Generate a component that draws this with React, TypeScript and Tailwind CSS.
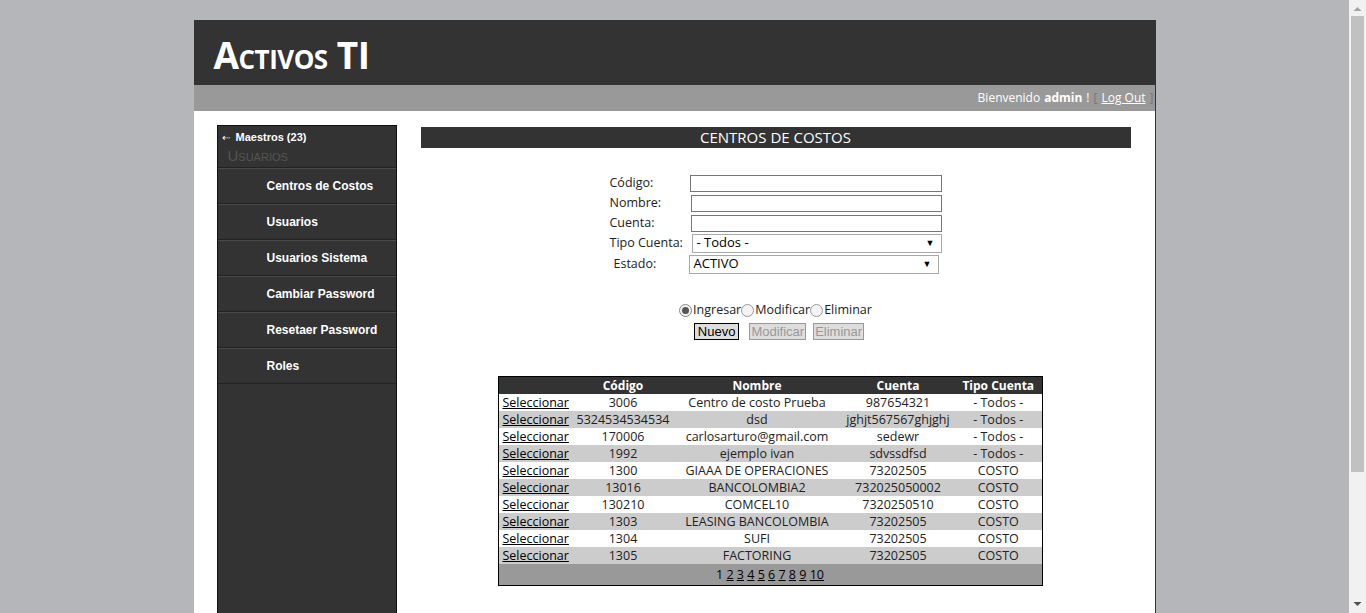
const menu = ['Centros de Costos', 'Usuarios', 'Usuarios Sistema', 'Cambiar Password', 'Resetaer Password', 'Roles']

const rows = [
  ['3006', 'Centro de costo Prueba', '987654321', '- Todos -'],
  ['5324534534534', 'dsd', 'jghjt567567ghjghj', '- Todos -'],
  ['170006', 'carlosarturo@gmail.com', 'sedewr', '- Todos -'],
  ['1992', 'ejemplo ivan', 'sdvssdfsd', '- Todos -'],
  ['1300', 'GIAAA DE OPERACIONES', '73202505', 'COSTO'],
  ['13016', 'BANCOLOMBIA2', '732025050002', 'COSTO'],
  ['130210', 'COMCEL10', '7320250510', 'COSTO'],
  ['1303', 'LEASING BANCOLOMBIA', '73202505', 'COSTO'],
  ['1304', 'SUFI', '73202505', 'COSTO'],
  ['1305', 'FACTORING', '73202505', 'COSTO'],
]

const ui = "font-['Open_Sans','Noto_Sans',sans-serif]"
const arial = "font-['Liberation_Sans',Arial,sans-serif]"

function Field({ label, children }: { label: string; children: React.ReactNode }) {
  return (
    <div className="flex h-5 items-center">
      <span className="w-[80px] text-[12.5px] text-[#222]">{label}</span>
      {children}
    </div>
  )
}

function Select({ value, w }: { value: string; w: string }) {
  return (
    <div className={`${w} flex h-[19px] items-center justify-between border border-[#a9a9a9] bg-white pl-1 pr-1.5 text-[13px] text-black`}>
      <span>{value}</span>
      <span className="text-[9px]">▼</span>
    </div>
  )
}

// page scrollbar as seen in the screenshot
function Scrollbar() {
  return (
    <div className="fixed right-0 top-0 flex h-screen w-[17px] flex-col items-center bg-[#f1f1f1]">
      <svg width="9" height="14" viewBox="0 0 9 14" className="mt-0.5">
        <path d="M0.5 9 L4.5 5 L8.5 9 Z" fill="#a3a3a3" />
      </svg>
      <div className="h-[456px] w-[13px] bg-[#c1c1c1]" />
      <div className="flex-1" />
      <svg width="9" height="14" viewBox="0 0 9 14" className="mb-0.5">
        <path d="M0.5 5 L4.5 9 L8.5 5 Z" fill="#505050" />
      </svg>
    </div>
  )
}

export default function App() {
  return (
    <div className={`min-h-[780px] bg-[#b5b6ba] pr-[17px] pt-5 ${ui}`}>
      <div className="mx-auto w-[962px] border-r border-[#333] bg-white">
        <header className="flex h-[65px] items-center bg-[#333] px-5">
          <h1 className="pt-1 text-[37px] font-bold leading-none tracking-[-0.5px] text-white [font-variant:small-caps]">Activos TI</h1>
        </header>
        <div className="flex h-[26px] items-center justify-end bg-[#999] pr-px text-[12px] text-white">
          Bienvenido <b className="ml-1">admin</b>
          <span className="ml-1">!</span>
          <span className="ml-1 text-[#777]">[</span>
          <a className="mx-1 underline">Log Out</a>
          <span className="text-[#777]">]</span>
        </div>

        <div className="flex gap-6 pl-[23px] pr-6 pt-[14px]">
          <aside className={`min-h-[640px] w-[180px] shrink-0 border border-[#111] bg-[#333] ${arial}`}>
            <div className="h-[42px] border-b border-[#222] px-1 pt-[3px]">
              <div className="flex items-center text-[11px] font-bold text-white">
                <span className="mr-1.5 text-[10px] font-normal">⇠</span>Maestros (23)
              </div>
              <div className="mt-[2px] pl-[6px] text-[15px] leading-4 text-[#555] [font-variant:small-caps]">Usuarios</div>
            </div>
            {menu.map((m) => (
              <div key={m} className="flex h-9 items-center border-b border-t border-b-[#222] border-t-[#4a4a4a] pl-[49px] text-[12px] font-bold text-white">
                {m}
              </div>
            ))}
          </aside>

          <main className="flex-1 pt-0.5">
            <div className="flex h-[21px] items-center justify-center bg-[#333] text-[15px] text-white">CENTROS DE COSTOS</div>

            <div className="mx-auto mt-[25px] w-[332px]">
              <Field label="Código:">
                <div className="h-[17px] w-[252px] border border-[#777] bg-white" />
              </Field>
              <Field label="Nombre:">
                <div className="ml-px h-[17px] w-[251px] border border-[#777] bg-white" />
              </Field>
              <Field label="Cuenta:">
                <div className="ml-px h-[17px] w-[251px] border border-[#777] bg-white" />
              </Field>
              <Field label="Tipo Cuenta:">
                <Select value="- Todos -" w="w-[250px] ml-[2px]" />
              </Field>
              <div className="mt-px flex h-5 items-center">
                <span className="w-[79px] pl-1 text-[12.5px] text-[#222]">Estado:</span>
                <Select value="ACTIVO" w="w-[250px]" />
              </div>
            </div>

            <div className="mt-[27px] flex items-center justify-center text-[12.5px] text-[#222]">
              <span className="mr-px inline-flex h-[13px] w-[13px] items-center justify-center rounded-full border border-[#888] bg-[#f3f3f3]">
                <span className="h-[7px] w-[7px] rounded-full bg-[#555]" />
              </span>
              Ingresar
              <span className="mr-px h-[13px] w-[13px] rounded-full border border-[#999] bg-[#f3f3f3]" />
              Modificar
              <span className="mr-px h-[13px] w-[13px] rounded-full border border-[#999] bg-[#f3f3f3]" />
              Eliminar
            </div>
            <div className={`mt-[3px] flex justify-center pl-[7px] text-[13px] ${arial}`}>
              <button className="h-[17px] border border-black bg-[#ddd] px-[3px] leading-none text-black">Nuevo</button>
              <button className="ml-[10px] h-[17px] border border-[#999] bg-[#ddd] px-px leading-none text-[#999]">Modificar</button>
              <button className="ml-[7px] h-[17px] border border-[#999] bg-[#ddd] px-px leading-none text-[#999]">Eliminar</button>
            </div>

            <table className="ml-[77px] mt-[36px] w-[545px] whitespace-nowrap border border-black text-[12.5px] leading-[17px] text-[#222]">
              <thead>
                <tr className="bg-[#333] text-[12px] text-white">
                  <th className="w-[75px]" />
                  <th className="w-[100px] font-bold">Código</th>
                  <th className="w-[168px] font-bold">Nombre</th>
                  <th className="w-[114px] font-bold">Cuenta</th>
                  <th className="font-bold">Tipo Cuenta</th>
                </tr>
              </thead>
              <tbody>
                {rows.map((r, i) => (
                  <tr key={r[0]} className={i % 2 ? 'bg-[#ccc]' : 'bg-white'}>
                    <td className="pl-1 text-black underline">Seleccionar</td>
                    {r.map((c, j) => (
                      <td key={j} className="text-center">{c}</td>
                    ))}
                  </tr>
                ))}
                <tr className="bg-[#999]">
                  <td colSpan={5} className="h-[22px] text-center text-black">
                    1{' '}
                    {[2, 3, 4, 5, 6, 7, 8, 9, 10].map((n) => (
                      <span key={n}>
                        <a className="underline">{n}</a>{' '}
                      </span>
                    ))}
                  </td>
                </tr>
              </tbody>
            </table>
          </main>
        </div>
      </div>
      <Scrollbar />
    </div>
  )
}
